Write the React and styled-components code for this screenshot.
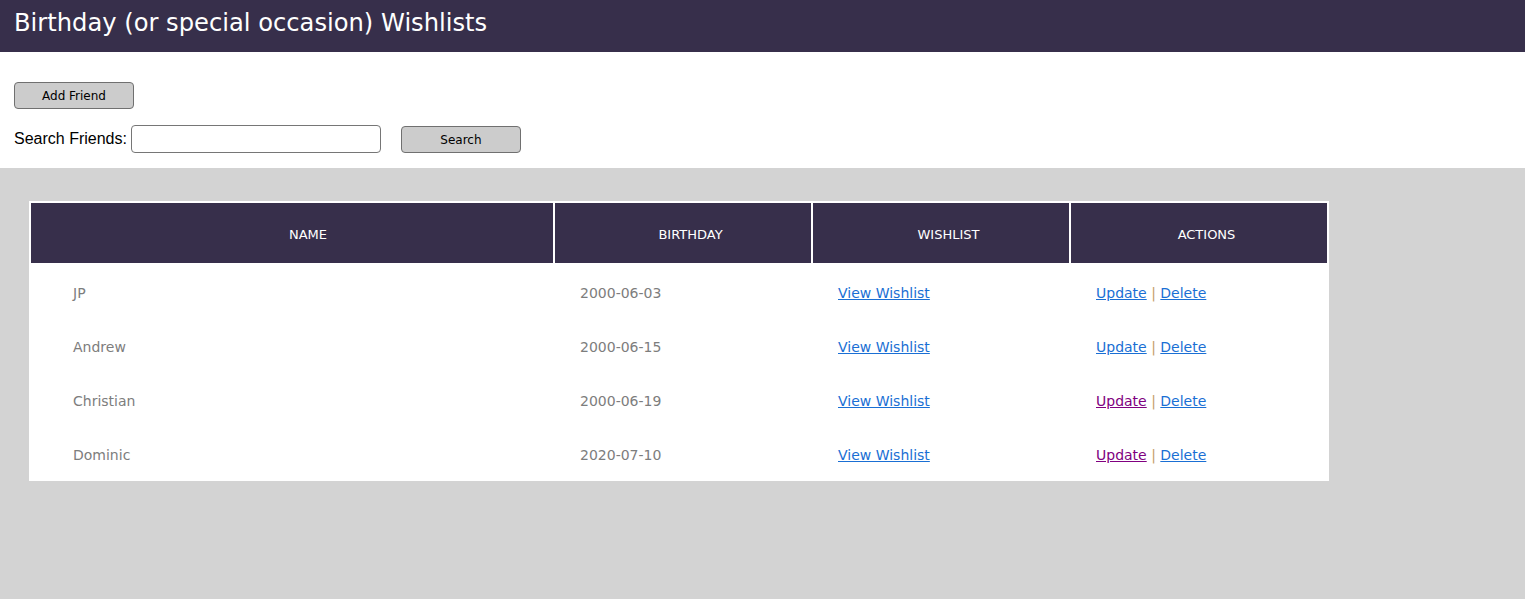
import React from "react";
import styled, { createGlobalStyle } from "styled-components";

const GlobalStyle = createGlobalStyle`
  html, body {
    margin: 0;
    padding: 0;
    background: #d3d3d3;
    font-family: "DejaVu Sans", "Open Sans", sans-serif;
  }
`;

const Header = styled.header`
  height: 52px;
  background: #372f4b;
  display: flex;
  align-items: center;
  padding: 0 14px;
`;

const Title = styled.h1`
  margin: 0;
  color: #ffffff;
  font-size: 24.2px;
  font-weight: 400;
  margin-top: -7px;
`;

const Toolbar = styled.section`
  background: #ffffff;
  padding: 30px 14px 15px;
  display: flex;
  flex-direction: column;
  gap: 15px;
`;

const Row = styled.div`
  display: flex;
  align-items: center;
`;

const GrayButton = styled.button`
  width: 120px;
  height: 27px;
  background: #cccccc;
  border: 1px solid #707070;
  border-radius: 4px;
  font-family: "DejaVu Sans", sans-serif;
  font-size: 12px;
  color: #000;
  padding: 0;
  margin-left: ${(p) => p.$offset || 0}px;
  margin-top: ${(p) => (p.$offset ? 2 : 0)}px;
`;

const Label = styled.label`
  font-family: "Liberation Sans", Arial, sans-serif;
  font-size: 16px;
  color: #000;
  margin-right: 4px;
`;

const SearchInput = styled.input`
  width: 250px;
  height: 28px;
  box-sizing: border-box;
  border: 1px solid #767676;
  border-radius: 4px;
`;

const Main = styled.main`
  padding: 33px 29px;
`;

const Table = styled.table`
  width: 1300px;
  background: #ffffff;
  border-spacing: 2px;
`;

const Th = styled.th`
  background: #372f4b;
  color: #ffffff;
  font-size: 13px;
  font-weight: 400;
  height: 60px;
  padding: 2px 10px 0 ${(p) => (p.$first ? 42 : 25)}px;
  width: ${(p) => p.$w}px;
  box-sizing: border-box;
`;

const Td = styled.td`
  height: 52px;
  box-sizing: border-box;
  padding: 3px 0 0 ${(p) => (p.$first ? 42 : 25)}px;
  color: #7d7d7d;
  font-size: 14px;
  font-weight: 400;
`;

const Link = styled.a`
  color: ${(p) => (p.$visited ? "#800080" : "#1a6fd4")};
  text-decoration: underline;
  cursor: pointer;
`;

const Sep = styled.span`
  color: #c59d6a;
`;

const friends = [
  { name: "JP", birthday: "2000-06-03", visited: false },
  { name: "Andrew", birthday: "2000-06-15", visited: false },
  { name: "Christian", birthday: "2000-06-19", visited: true },
  { name: "Dominic", birthday: "2020-07-10", visited: true },
];

export default function App() {
  return (
    <>
      <GlobalStyle />
      <Header>
        <Title>Birthday (or special occasion) Wishlists</Title>
      </Header>
      <Toolbar>
        <Row>
          <GrayButton>Add Friend</GrayButton>
        </Row>
        <Row>
          <Label>Search Friends:</Label>
          <SearchInput type="text" />
          <GrayButton $offset={20}>Search</GrayButton>
        </Row>
      </Toolbar>
      <Main>
        <Table>
          <thead>
            <tr>
              <Th $first $w={522}>NAME</Th>
              <Th $w={256}>BIRTHDAY</Th>
              <Th $w={256}>WISHLIST</Th>
              <Th $w={256}>ACTIONS</Th>
            </tr>
          </thead>
          <tbody>
            {friends.map((f) => (
              <tr key={f.name}>
                <Td $first>{f.name}</Td>
                <Td>{f.birthday}</Td>
                <Td>
                  <Link>View Wishlist</Link>
                </Td>
                <Td>
                  <Link $visited={f.visited}>Update</Link> <Sep>|</Sep> <Link>Delete</Link>
                </Td>
              </tr>
            ))}
          </tbody>
        </Table>
      </Main>
    </>
  );
}
